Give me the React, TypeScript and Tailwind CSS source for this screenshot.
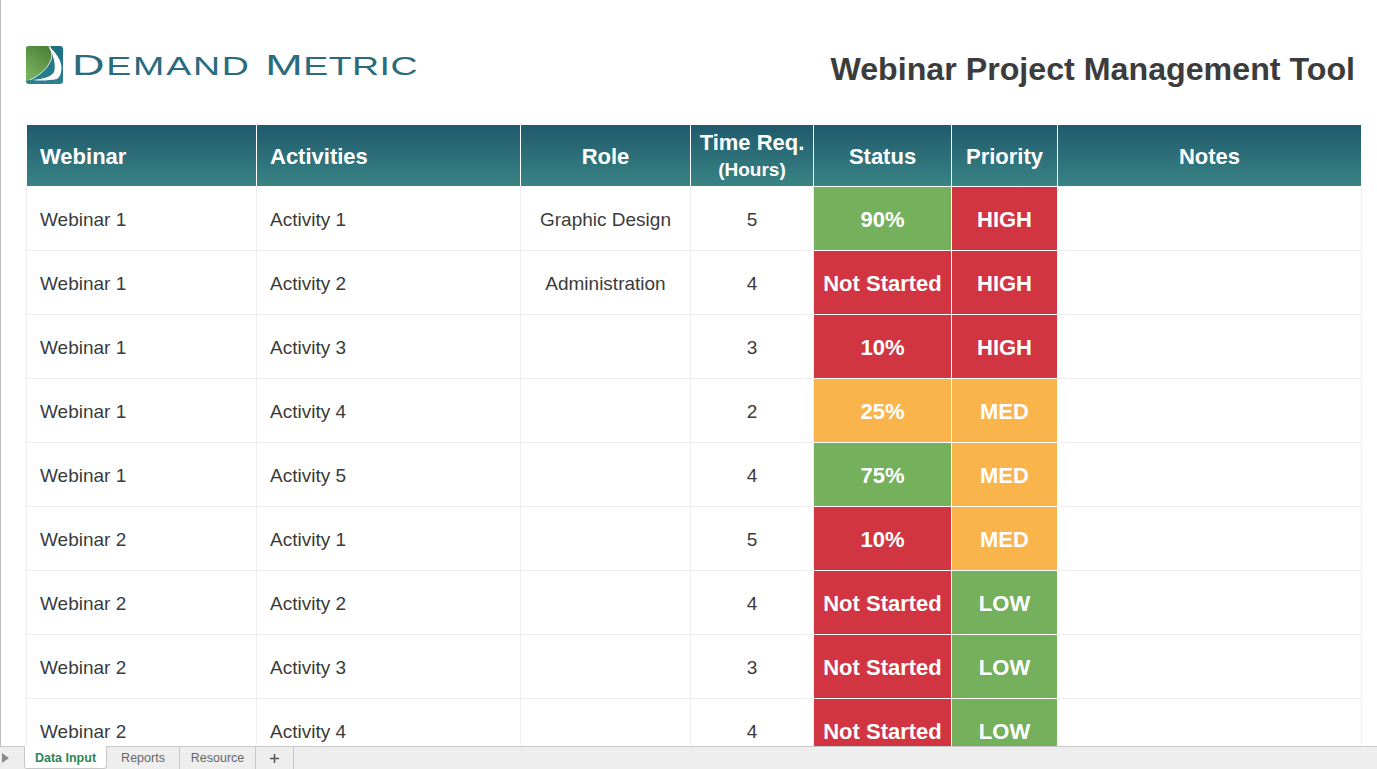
const rows: [string, string, string, string, string, string, string, string][] = [
  ["Webinar 1", "Activity 1", "Graphic Design", "5", "90%", "g", "HIGH", "r"],
  ["Webinar 1", "Activity 2", "Administration", "4", "Not Started", "r", "HIGH", "r"],
  ["Webinar 1", "Activity 3", "", "3", "10%", "r", "HIGH", "r"],
  ["Webinar 1", "Activity 4", "", "2", "25%", "o", "MED", "o"],
  ["Webinar 1", "Activity 5", "", "4", "75%", "g", "MED", "o"],
  ["Webinar 2", "Activity 1", "", "5", "10%", "r", "MED", "o"],
  ["Webinar 2", "Activity 2", "", "4", "Not Started", "r", "LOW", "g"],
  ["Webinar 2", "Activity 3", "", "3", "Not Started", "r", "LOW", "g"],
  ["Webinar 2", "Activity 4", "", "4", "Not Started", "r", "LOW", "g"],
];

const fills: Record<string, string> = {
  g: "bg-[#75b05c]",
  r: "bg-[#d13541]",
  o: "bg-[#fab44c]",
};

const gridCols = "grid grid-cols-[230px_264px_170px_123px_138px_106px_304px]";
const headCols = "grid grid-cols-[230px_264px_170px_123px_138px_106px_303px]";

function Logo() {
  return (
    <svg width="37" height="38" viewBox="0 0 37 38" className="shrink-0">
      <defs>
        <linearGradient id="lgGreen" x1="0.7" y1="0" x2="0.2" y2="1">
          <stop offset="0" stopColor="#4d813a" />
          <stop offset="1" stopColor="#7cb560" />
        </linearGradient>
        <linearGradient id="lgTeal" x1="0.5" y1="0" x2="0.5" y2="1">
          <stop offset="0" stopColor="#1c6f80" />
          <stop offset="1" stopColor="#2a7f90" />
        </linearGradient>
      </defs>
      <rect x="0" y="0" width="37" height="38" rx="3" fill="url(#lgTeal)" />
      <path d="M3 0H24C26 5 26.5 10 25 14C22 22 13 30 4 34L0 35V3C0 1 1 0 3 0Z" fill="url(#lgGreen)" />
      <path d="M22 0C30 6 35 14 35.5 21C35.5 27 34 31 31 33C24 34.5 14 35 7 34C17 33 25 31 28 26C30 20 28 9 22 0Z" fill="#fff" />
      <path d="M24 0C26 5 26.5 10 25 14C22 22 13 30 4 34" fill="none" stroke="#fff" strokeWidth="0.8" />
    </svg>
  );
}

function LogoText() {
  return (
    <div className="ml-[9px] h-[38px] w-[345px] flex items-center">
      <span className="origin-left scale-x-[1.5] whitespace-nowrap font-['Liberation_Sans',sans-serif] text-[#2a6b7c] tracking-[1.2px] [word-spacing:1.5px] leading-none text-[25px]">
        <span className="text-[30px]">D</span>EMAND <span className="tracking-[0.3px]"><span className="text-[30px]">M</span>ETRIC</span>
      </span>
    </div>
  );
}

export default function App() {
  return (
    <div className="h-[769px] w-[1377px] flex flex-col overflow-hidden bg-white font-['Liberation_Sans',Arial,sans-serif]">
      <div className="flex-1 min-h-0 overflow-hidden border-l border-[#bdbdbd] pl-[26px]">
        <div className="flex items-start justify-between h-[125px] pt-[46px] w-[1329px] -ml-px">
          <div className="flex items-center">
            <Logo />
            <LogoText />
          </div>
          <h1 className="-mt-px text-[32.2px] leading-[48px] font-bold text-[#3c3c3c] whitespace-nowrap">
            Webinar Project Management Tool
          </h1>
        </div>
        <div className={`${headCols} h-[62px] w-[1334px] border-b border-white text-white font-bold text-[22px]`}>
          <div className="flex items-center pl-[13px] border-r border-white bg-gradient-to-b from-[#205a6d] to-[#398484] pt-[2px]">Webinar</div>
          <div className="flex items-center pl-[13px] border-r border-white bg-gradient-to-b from-[#205a6d] to-[#398484] pt-[2px]">Activities</div>
          <div className="flex items-center justify-center border-r border-white bg-gradient-to-b from-[#205a6d] to-[#398484] pt-[2px]">Role</div>
          <div className="flex flex-col items-center justify-center border-r border-white bg-gradient-to-b from-[#205a6d] to-[#398484] leading-[27px] pt-[1px]">
            <span>Time Req.</span>
            <span className="text-[19px] leading-[27px]">(Hours)</span>
          </div>
          <div className="flex items-center justify-center border-r border-white bg-gradient-to-b from-[#205a6d] to-[#398484] pt-[2px]">Status</div>
          <div className="flex items-center justify-center border-r border-white bg-gradient-to-b from-[#205a6d] to-[#398484] pt-[2px]">Priority</div>
          <div className="flex items-center justify-center bg-gradient-to-b from-[#205a6d] to-[#398484] pt-[2px]">Notes</div>
        </div>
        <div className="w-[1336px] -ml-px">
          {rows.map((r, i) => (
            <div key={i} className={`${gridCols} h-[64px] text-[19px] text-[#3b3b3b] border-l border-[#efefef]`}>
              <div className="flex items-center pl-[13px] pt-[3px] border-r border-b border-[#efefef]">{r[0]}</div>
              <div className="flex items-center pl-[13px] pt-[3px] border-r border-b border-[#efefef]">{r[1]}</div>
              <div className="flex items-center justify-center pt-[3px] border-r border-b border-[#efefef]">{r[2]}</div>
              <div className="flex items-center justify-center pt-[3px] border-r border-b border-[#efefef]">{r[3]}</div>
              <div className={`flex items-center justify-center pt-[1px] border-r border-b border-white text-white font-bold text-[22px] ${fills[r[5]]}`}>{r[4]}</div>
              <div className={`flex items-center justify-center pt-[1px] border-r border-b border-white text-white font-bold text-[22px] ${fills[r[7]]}`}>{r[6]}</div>
              <div className="border-r border-b border-[#efefef]" />
            </div>
          ))}
        </div>
      </div>
      <div className="h-[23px] shrink-0 flex bg-[#eeeeee] border-t border-[#c8c8c8] text-[12.5px] text-[#666666]">
        <div className="w-[24px] flex items-center pl-[2px]">
          <svg width="7" height="10" viewBox="0 0 7 10"><path d="M0 0L7 5L0 10Z" fill="#8a8a8a" /></svg>
        </div>
        <div className="-mt-px pt-[2px] h-[23px] w-[83px] flex items-center justify-center bg-white border border-t-0 border-[#c8c8c8] rounded-b-[3px] text-[#2e8555] font-bold">Data Input</div>
        <div className="w-[73px] flex items-center justify-center border-r border-[#c8c8c8]">Reports</div>
        <div className="w-[76px] flex items-center justify-center border-r border-[#c8c8c8]">Resource</div>
        <div className="w-[38px] flex items-center justify-center border-r border-[#c8c8c8]">
          <svg width="11" height="11" viewBox="0 0 11 11"><path d="M5.5 1V10M1 5.5H10" stroke="#555" strokeWidth="1.5" /></svg>
        </div>
      </div>
    </div>
  );
}
